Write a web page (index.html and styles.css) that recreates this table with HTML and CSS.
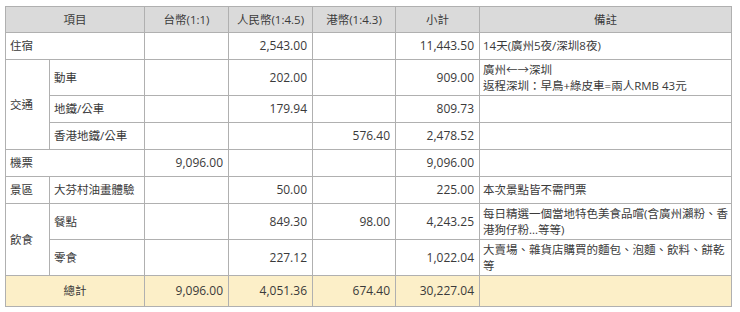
FILE: index.html
```html
<!DOCTYPE html>
<html lang="zh-Hant">
<head>
<meta charset="utf-8">
<link rel="stylesheet" href="styles.css">
</head>
<body>
<table class="budget">
  <colgroup>
    <col class="c-cat"><col class="c-item"><col class="c-num"><col class="c-num"><col class="c-num3"><col class="c-num"><col class="c-note">
  </colgroup>
  <thead>
    <tr><th colspan="2">項目</th><th>台幣(1:1)</th><th>人民幣(1:4.5)</th><th>港幣(1:4.3)</th><th>小計</th><th>備註</th></tr>
  </thead>
  <tbody>
    <tr><td colspan="2">住宿</td><td class="n"></td><td class="n">2,543.00</td><td class="n"></td><td class="n">11,443.50</td><td class="note">14天(廣州5夜/深圳8夜)</td></tr>
    <tr class="tall"><td rowspan="3">交通</td><td>動車</td><td class="n"></td><td class="n">202.00</td><td class="n"></td><td class="n">909.00</td><td class="note">廣州←→深圳<br>返程深圳：早鳥+綠皮車=兩人RMB 43元</td></tr>
    <tr><td>地鐵/公車</td><td class="n"></td><td class="n">179.94</td><td class="n"></td><td class="n">809.73</td><td class="note"></td></tr>
    <tr><td>香港地鐵/公車</td><td class="n"></td><td class="n"></td><td class="n">576.40</td><td class="n">2,478.52</td><td class="note"></td></tr>
    <tr><td colspan="2">機票</td><td class="n">9,096.00</td><td class="n"></td><td class="n"></td><td class="n">9,096.00</td><td class="note"></td></tr>
    <tr><td>景區</td><td>大芬村油畫體驗</td><td class="n"></td><td class="n">50.00</td><td class="n"></td><td class="n">225.00</td><td class="note">本次景點皆不需門票</td></tr>
    <tr class="tall"><td rowspan="2">飲食</td><td>餐點</td><td class="n"></td><td class="n">849.30</td><td class="n">98.00</td><td class="n">4,243.25</td><td class="note">每日精選一個當地特色美食品嚐(含廣州瀨粉、香港狗仔粉...等等)</td></tr>
    <tr class="tall"><td>零食</td><td class="n"></td><td class="n">227.12</td><td class="n"></td><td class="n">1,022.04</td><td class="note">大賣場、雜貨店購買的麵包、泡麵、飲料、餅乾等</td></tr>
  </tbody>
  <tfoot>
    <tr><td colspan="2" class="total-label">總計</td><td class="n">9,096.00</td><td class="n">4,051.36</td><td class="n">674.40</td><td class="n">30,227.04</td><td class="note"></td></tr>
  </tfoot>
</table>
</body>
</html>
```
FILE: styles.css
```css
html, body {
  margin: 0;
  padding: 0;
  background: #ffffff;
}
body {
  padding: 6px 0 0 5px;
  font-family: "Open Sans", "Noto Sans CJK TC", sans-serif;
  font-size: 11.5px;
  color: #3a3a3a;
}
.budget {
  border-collapse: collapse;
  table-layout: fixed;
  width: 726px;
}
.c-cat { width: 44px; }
.c-item { width: 95px; }
.c-num { width: 84px; }
.c-num3 { width: 83px; }
.c-note { width: 252px; }
.budget th,
.budget td {
  border: 1px solid #b0b0b0;
  padding: 1px 4px;
  line-height: 16px;
  vertical-align: middle;
  text-align: left;
  font-weight: normal;
}
.budget th {
  background: #dadada;
  text-align: center;
  height: 25px;
  padding: 0 4px;
}
.budget tbody tr { height: 27px; }
.budget tbody tr.tall { height: 36px; }
.budget td.n {
  text-align: right;
  padding-right: 5px;
  font-size: 12px;
}
.budget td.note {
  padding-left: 3px;
  padding-right: 2px;
}
.budget tfoot td {
  background: #fcefc8;
  height: 28px;
}
.budget td.total-label {
  text-align: center;
}
```
